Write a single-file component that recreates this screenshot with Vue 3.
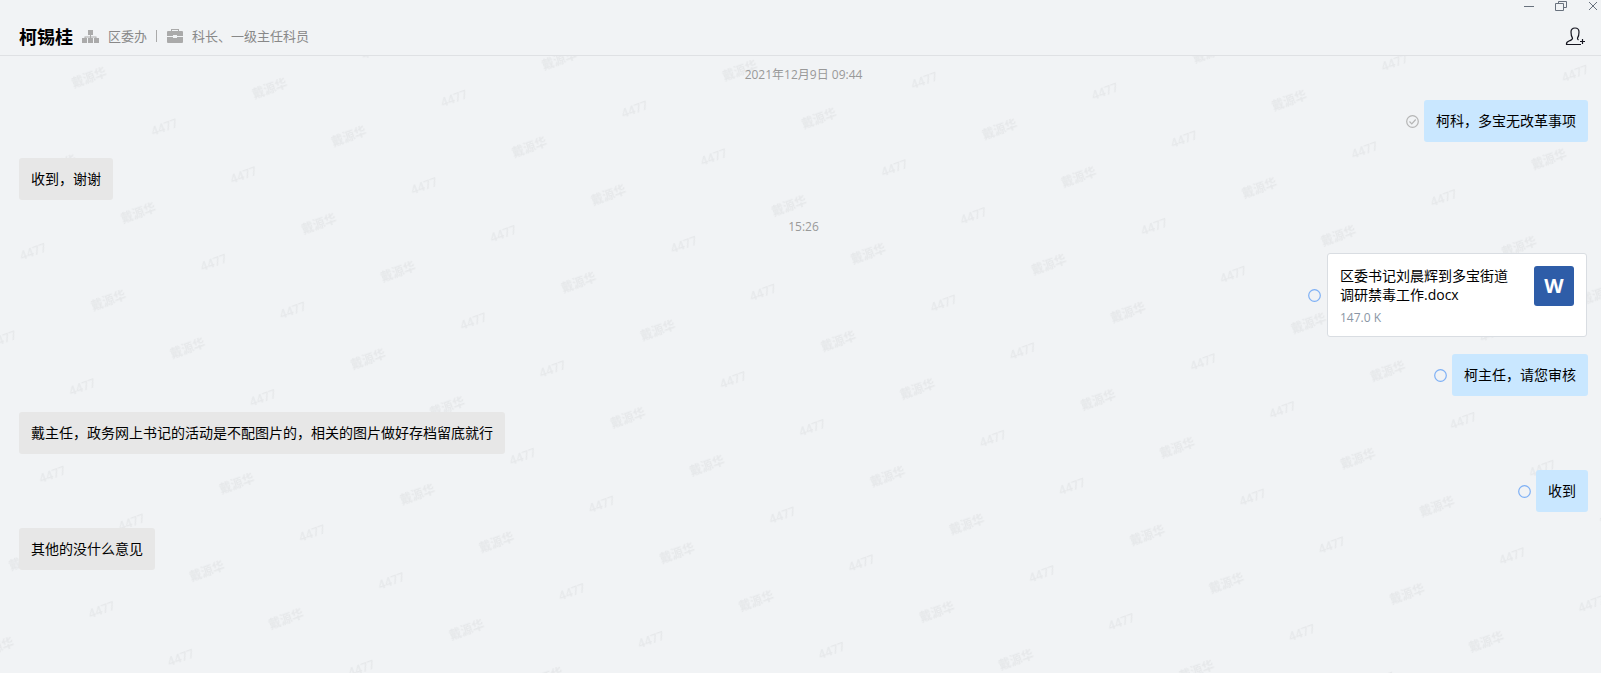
<template>
  <div class="chat">
    <header class="chat-header">
      <div class="window-bar">
        <button type="button" class="window-btn" aria-label="最小化">
          <svg width="12" height="12" viewBox="0 0 12 12"><path d="M1 6.5h10" /></svg>
        </button>
        <button type="button" class="window-btn" aria-label="还原">
          <svg width="12" height="12" viewBox="0 0 12 12">
            <path d="M3.500 3.500v-2h8v6h-3M.5 3.500h8v7h-8z" />
          </svg>
        </button>
        <button type="button" class="window-btn" aria-label="关闭">
          <svg width="12" height="12" viewBox="0 0 12 12"><path d="M2 2l8 8M10 2l-8 8" /></svg>
        </button>
      </div>
      <div class="contact">
        <h1 class="contact__name">{{ contact.name }}</h1>
        <svg class="contact__icon" width="17" height="14" viewBox="0 0 17 14">
          <path d="M6 1h5v5H6zM8 6h1v1.500h5.500V9h-1v-.5H9V9H8v-.5H3.500V9h-1V7.500H8zM0 9h5v5H0zM6 9h5v5H6zM12 9h5v5h-5z" />
        </svg>
        <span class="contact__text">{{ contact.department }}</span>
        <span class="contact__divider"></span>
        <svg class="contact__icon" width="16" height="14" viewBox="0 0 16 14">
          <path
            fill-rule="evenodd"
            d="M4 2V0h8v2h3q1 0 1 1v4h-6V6H6v1H0V3q0-1 1-1zM5 2h6V1H5zM0 8h6v1h4V8h6v5q0 1-1 1H1q-1 0-1-1z"
          />
        </svg>
        <span class="contact__text">{{ contact.position }}</span>
        <button type="button" class="contact__add" aria-label="添加成员">
          <svg width="20" height="19" viewBox="0 0 20 19">
            <path
              d="M16 17.500H1.500c-.3-2 .5-2.800 2.500-3.500 2.500-.9 3.500-1.300 3.500-2.800C6 9 6 7 6 5c0-2.500 1.500-4 4-4s4 1.500 4 4c0 2 0 4-1.500 6.200 0 1 .3 1.300 1 1.800M17.500 12v5M15 14.500h5"
            />
          </svg>
        </button>
      </div>
    </header>

    <main class="chat-body">
      <!-- Водяной знак под сообщениями -->
      <svg class="watermark" aria-hidden="true">
        <defs>
          <pattern
            id="watermark"
            width="224"
            height="144"
            patternUnits="userSpaceOnUse"
            patternTransform="translate(349 81) rotate(-20) translate(-90 -36)"
          >
            <text x="90" y="40">戴源华</text>
            <text x="202" y="40">4477</text>
            <text x="32" y="112">戴源华</text>
            <text x="144" y="112">4477</text>
          </pattern>
        </defs>
        <rect width="100%" height="100%" fill="url(#watermark)" />
      </svg>

      <template v-for="item in messages" :key="item.id">
        <time v-if="item.type === 'time'" class="time">{{ item.text }}</time>
        <div v-else class="message" :class="{ 'message--own': item.own }">
          <svg v-if="item.own" class="status" :class="{ 'status--read': item.read }" width="13" height="13" viewBox="0 0 13 13">
            <circle cx="6.500" cy="6.500" r="5.800" />
            <path v-if="item.read" d="M3.500 6.500l2.300 2.300 3.900-4.300" />
          </svg>
          <a v-if="item.type === 'file'" href="#" class="file">
            <span class="file__info">
              <span class="file__name">{{ item.text }}</span>
              <span class="file__size">{{ item.size }}</span>
            </span>
            <span class="file__type">W</span>
          </a>
          <p v-else class="bubble">{{ item.text }}</p>
        </div>
      </template>
    </main>
  </div>
</template>

<script setup>
import { ref } from "vue"

const contact = {
  name: "柯锡桂",
  department: "区委办",
  position: "科长、一级主任科员"
}

// Лента: время, текстовые сообщения и файлы
const messages = ref([
  { id: 1, type: "time", text: "2021年12月9日 09:44" },
  { id: 2, type: "text", own: true, read: true, text: "柯科，多宝无改革事项" },
  { id: 3, type: "text", text: "收到，谢谢" },
  { id: 4, type: "time", text: "15:26" },
  { id: 5, type: "file", own: true, text: "区委书记刘晨辉到多宝街道调研禁毒工作.docx", size: "147.0 K" },
  { id: 6, type: "text", own: true, text: "柯主任，请您审核" },
  { id: 7, type: "text", text: "戴主任，政务网上书记的活动是不配图片的，相关的图片做好存档留底就行" },
  { id: 8, type: "text", own: true, text: "收到" },
  { id: 9, type: "text", text: "其他的没什么意见" }
])
</script>

<style>
body {
  margin: 0;
  background: #f1f3f5;
}
</style>

<style scoped>
.chat {
  display: flex;
  flex-direction: column;
  min-height: 100vh;
  background: #f1f3f5;
  color: #000;
  font-family: "Open Sans", "Noto Sans CJK SC", sans-serif;
  font-size: 14px;
}
button {
  padding: 0;
  border: 0;
  background: none;
  cursor: pointer;
}
button svg {
  display: block;
  fill: none;
}
.chat-header {
  border-bottom: 1px solid #dfe1e4;
}
.window-bar {
  display: flex;
  justify-content: flex-end;
  gap: 20px;
  padding-right: 2px;
}
.window-btn svg {
  stroke: #68717d;
}
.contact {
  display: flex;
  align-items: center;
  height: 31px;
  padding: 8px 16px 4px 19px;
}
.contact__name {
  margin: 0 9px 0 0;
  padding-top: 3px;
  font-size: 18px;
  line-height: 24px;
}
.contact__icon {
  margin-right: 9px;
  fill: #aaa;
}
.contact__text {
  color: #888;
  font-size: 13px;
  line-height: 20px;
}
.contact__divider {
  width: 1px;
  height: 12px;
  margin: 0 10px 0 9px;
  background: #aaa;
}
.contact__add {
  margin-left: auto;
  padding-top: 2px;
}
.contact__add svg {
  stroke: #15151f;
  stroke-width: 1.2;
}
.chat-body {
  position: relative;
  flex: 1;
  display: flex;
  flex-direction: column;
  gap: 16px;
  padding: 8px 13px 16px 19px;
}
.watermark {
  position: absolute;
  inset: 0;
  width: 100%;
  height: 100%;
}
.watermark text {
  fill: #e6e8ea;
  font-size: 12px;
  font-weight: 600;
  text-anchor: middle;
}
.time {
  position: relative;
  align-self: center;
  padding-top: 2px;
  color: #999;
  font-size: 12px;
  line-height: 18px;
}
.message {
  position: relative;
  display: flex;
  align-items: center;
  gap: 5px;
}
.message--own {
  justify-content: flex-end;
}
.status {
  fill: none;
  stroke: #7eb0f5;
  stroke-width: 1.2;
}
.status--read {
  stroke: #b5b5b5;
}
.bubble {
  margin: 0;
  padding: 11px 12px;
  border-radius: 3px;
  background: #e7e7e7;
  line-height: 20px;
}
.message--own .bubble {
  background: #c9e7ff;
}
.file {
  display: flex;
  justify-content: space-between;
  box-sizing: border-box;
  width: 260px;
  margin: 1px;
  padding: 12px 12px 9px;
  border: 1px solid #d9dde2;
  border-radius: 3px;
  background: #fff;
  color: #000;
  text-decoration: none;
}
.file__info {
  width: 172px;
}
.file__name {
  display: block;
  line-height: 19px;
}
.file__size {
  display: block;
  margin-top: 5px;
  color: #8a96a5;
  font-size: 12px;
  line-height: 18px;
}
.file__type {
  width: 40px;
  height: 40px;
  border-radius: 3px;
  background: #2e5da8;
  color: #fff;
  font-size: 20px;
  font-weight: 700;
  line-height: 40px;
  text-align: center;
}
</style>
